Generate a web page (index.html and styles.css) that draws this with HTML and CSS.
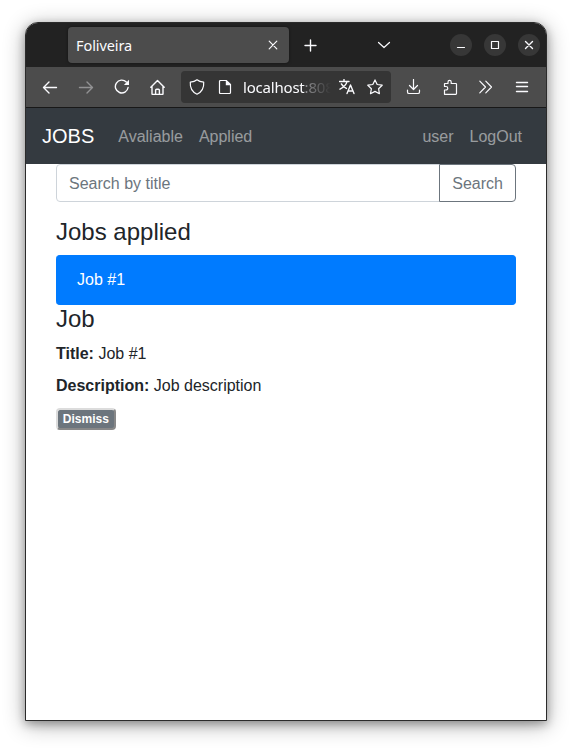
FILE: index.html
```html
<!DOCTYPE html>
<html lang="en">
<head>
<meta charset="utf-8">
<title>Foliveira</title>
<link rel="stylesheet" href="styles.css">
</head>
<body>
<div class="window">
  <div class="tabbar">
    <div class="tab"><span>Foliveira</span>
      <svg class="icon" viewBox="0 0 16 16"><path d="M4.200 4.200l7.600 7.600M11.800 4.200l-7.600 7.600"/></svg>
    </div>
    <svg class="icon new-tab" viewBox="0 0 16 16"><path class="bold" d="M7.500 3v11M2 8.500h11"/></svg>
    <svg class="icon all-tabs" viewBox="0 0 16 16"><path d="M2.500 5.500l5.500 5 5.500-5"/></svg>
    <div class="controls">
      <span class="control"><svg class="icon" viewBox="0 0 16 16"><path d="M4.500 10.500h7"/></svg></span>
      <span class="control"><svg class="icon" viewBox="0 0 16 16"><path d="M4.500 4.500h7v7h-7z"/></svg></span>
      <span class="control"><svg class="icon" viewBox="0 0 16 16"><path class="bold" d="M4.500 4.500l7 7M11.500 4.500l-7 7"/></svg></span>
    </div>
  </div>
  <div class="toolbar">
    <span class="tool"><svg class="icon" viewBox="0 0 16 16"><path class="bold" d="M14.500 8.500H1.500M7 3L1.500 8.500 7 14"/></svg></span>
    <span class="tool disabled"><svg class="icon" viewBox="0 0 16 16"><path class="bold" d="M1.500 8.500h13M9 3l5.500 5.500L9 14"/></svg></span>
    <span class="tool"><svg class="icon" viewBox="0 0 16 16"><path class="bold" d="M12.300 3A6.400 6.400 0 1 0 14.100 8.500"/><path class="solid" d="M15 .8v5.100H9.900z"/></svg></span>
    <span class="tool"><svg class="icon" viewBox="0 0 16 16"><path class="bold" d="M.8 8.300l6.700-6.800 6.700 6.800M2 7.200v7.500q0 .8.800.8h9.400q.8 0 .8-.8V7.200M5.600 15.300v-4q0-1 1-1h1.800q1 0 1 1v4"/></svg></span>
    <div class="urlbar">
      <svg class="icon" viewBox="0 0 16 16"><path d="M8 .8C6 2.500 3.800 3 1.300 3.200c-.4 5.300 1.500 9.500 6.700 12 5.200-2.500 7.100-6.700 6.700-12C12.200 3 10 2.500 8 .8z"/></svg>
      <svg class="icon page" viewBox="0 0 16 16"><path d="M3.500 1.500h5.700l4.300 4v8q0 1-1 1h-9q-1 0-1-1v-11q0-1 1-1z"/><path class="solid" d="M8.800 1l5.200 5.200H8.800z"/></svg>
      <span class="url">localhost<span class="port">:808</span></span>
      <svg class="icon translate" viewBox="0 0 16 16"><path class="bold" d="M.5 2.500h9.500M5 .5v2M8 2.700C7.200 6 4.200 8.500 1 10.200M2.400 4.900c1 2.200 2.900 3.500 5 4.500M8 14.500l3.500-8.500 3.500 8.500M9.200 12h4.600"/></svg>
      <svg class="icon" viewBox="0 0 16 16"><path d="M8 .9l2.200 4.600 5 .7-3.600 3.500.8 5L8 12.400l-4.500 2.300.9-5L.8 6.200l5-.7z"/></svg>
    </div>
    <span class="tool"><svg class="icon" viewBox="0 0 16 16"><path d="M7.500.5v10M3.500 6.500l4 4 4-4M1.500 11v1.900q0 1.600 1.600 1.600h8.800q1.600 0 1.600-1.600V11"/></svg></span>
    <span class="tool"><svg class="icon" viewBox="0 0 16 16"><path d="M2.500 15.300V11H4a1.700 1.700 0 0 0 0-3.500H2.500V4.800q0-.3.300-.3H6V3a1.600 1.600 0 0 1 3.200 0v1.500h4.600q.7 0 .7.700v9.400q0 .7-.7.700z"/></svg></span>
    <span class="tool"><svg class="icon" viewBox="0 0 16 16"><path d="M1.800 2.200L7.500 8l-5.700 5.800M7.800 2.200L13.500 8l-5.700 5.800"/></svg></span>
    <span class="tool"><svg class="icon" viewBox="0 0 16 16"><path class="bold" d="M2.500 3.500h11M2.500 7.500h11M2.500 12.500h11"/></svg></span>
  </div>
  <nav class="navbar">
    <span class="brand">JOBS</span>
    <span class="nav-link">Avaliable</span>
    <span class="nav-link">Applied</span>
    <span class="nav-link push">user</span>
    <span class="nav-link">LogOut</span>
  </nav>
  <main class="container">
    <div class="search">
      <input type="text" placeholder="Search by title">
      <button class="search-button">Search</button>
    </div>
    <h4>Jobs applied</h4>
    <div class="job-item">Job #1</div>
    <h4>Job</h4>
    <p><strong>Title:</strong> Job #1</p>
    <p><strong>Description:</strong> Job description</p>
    <button class="dismiss">Dismiss</button>
  </main>
</div>
</body>
</html>
```
FILE: styles.css
```css
* { box-sizing: border-box; }
body {
  margin: 0;
  height: 749px;
  padding: 22px 25px 28px;
  overflow: hidden;
  background: #fff;
  color: #212529;
  font: 16px/1.5 "Liberation Sans", sans-serif;
}
.window {
  height: 699px;
  border: 1px solid #2b2b2b;
  border-radius: 13px 13px 0 0;
  background: #fff;
  box-shadow: 0 3px 10px rgba(0, 0, 0, .3), 0 4px 22px rgba(0, 0, 0, .32);
  overflow: hidden;
}
.icon {
  display: block;
  flex: none;
  width: 16px;
  height: 16px;
  fill: none;
  stroke: #fbfbfe;
  stroke-width: 1.2;
  stroke-linecap: round;
  stroke-linejoin: round;
}
.icon .bold { stroke-width: 1.4; }
.icon .solid { fill: #fbfbfe; stroke: none; }
.tabbar {
  display: flex;
  align-items: center;
  height: 44px;
  padding: 0 6px 0 42px;
  background: #222;
}
.tab {
  display: flex;
  align-items: center;
  justify-content: space-between;
  width: 221px;
  height: 36px;
  padding: 0 8px;
  border-radius: 4px;
  background: #4c4c4c;
  box-shadow: 0 0 3px rgba(0, 0, 0, .5);
  color: #fbfbfe;
  font: 14.5px/20px "Noto Sans", sans-serif;
  letter-spacing: -.08px;
}
.tab span { padding-bottom: 1px; }
.new-tab { margin-left: 14px; }
.all-tabs { margin-left: 57px; }
.controls {
  display: flex;
  gap: 12px;
  margin-left: auto;
}
.control {
  display: grid;
  place-items: center;
  width: 22px;
  height: 22px;
  border-radius: 50%;
  background: #373737;
}
.toolbar {
  display: flex;
  align-items: center;
  height: 41px;
  padding: 0 6px;
  border-bottom: 1px solid #181818;
  background: #4c4c4c;
}
.tool {
  display: grid;
  place-items: center;
  width: 36px;
  height: 32px;
}
.disabled { opacity: .4; }
.urlbar {
  display: flex;
  align-items: center;
  width: 210px;
  height: 32px;
  margin: 0 5px;
  padding: 0 8px;
  border-radius: 4px;
  background: #353535;
}
.page { margin-left: 12px; }
.url {
  width: 88px;
  margin-left: 10px;
  padding-bottom: 1px;
  overflow: hidden;
  color: #fbfbfe;
  font: 15px/22px "Noto Sans", sans-serif;
  letter-spacing: -.2px;
  white-space: nowrap;
  mask-image: linear-gradient(to right, #000 60px, transparent 88px);
}
.port { color: #98989b; }
.translate { margin: 0 12px 0 8px; }
.navbar {
  display: flex;
  align-items: center;
  height: 56px;
  padding: 0 16px;
  background: #343a40;
}
.brand {
  margin-right: 16px;
  color: #fff;
  font-size: 20px;
}
.nav-link {
  padding: 10px 8px 8px;
  color: rgba(255, 255, 255, .5);
}
.push { margin-left: auto; }
.container { padding: 0 30px; }
.search {
  display: flex;
  height: 38px;
  margin-bottom: 16px;
}
.search input {
  flex: 1;
  min-width: 0;
  padding: 8px 12px 6px;
  border: 1px solid #ced4da;
  border-radius: 4px 0 0 4px;
  font: inherit;
}
.search input::placeholder { color: #6c757d; opacity: 1; }
.search-button {
  margin-left: -1px;
  padding: 7px 12px 6px;
  border: 1px solid #6c757d;
  border-radius: 0 4px 4px 0;
  background: #fff;
  color: #6c757d;
  font: inherit;
}
h4 {
  margin: 0 0 8px;
  font-size: 24px;
  font-weight: 400;
  line-height: 1.2;
}
.job-item {
  height: 50px;
  padding: 12px 21px;
  border: 1px solid #007bff;
  border-left: 0;
  border-radius: 4px;
  background: #007bff;
  color: #fff;
}
p { margin: 0 0 8px; }
.dismiss {
  display: block;
  margin-top: 10px;
  padding: 3px 4.8px;
  border: 2px outset #dcdcdc;
  border-radius: 4px;
  background: #6c757d;
  color: #fff;
  font: bold 12px/12px "Liberation Sans", sans-serif;
}
```
